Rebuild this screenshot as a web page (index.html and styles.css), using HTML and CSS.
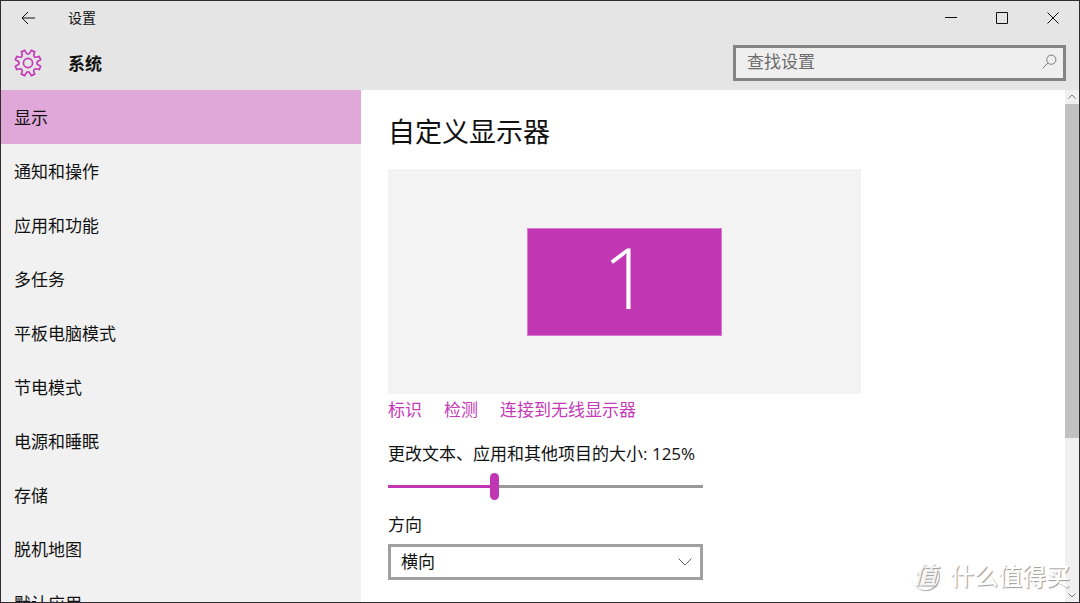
FILE: index.html
```html
<!DOCTYPE html>
<html lang="zh-CN">
<head>
<meta charset="utf-8">
<meta name="viewport" content="width=device-width, initial-scale=1">
<title>设置</title>
<link rel="stylesheet" href="styles.css">
</head>
<body>
<div class="window">
  <header class="top">
    <div class="titlebar">
      <button class="caption back" type="button" aria-label="返回">
        <svg width="16" height="14" viewBox="0 0 16 14"><path d="M15 7H2M8 1L2 7l6 6"/></svg>
      </button>
      <span class="app-name">设置</span>
      <button class="caption" type="button" aria-label="最小化">
        <svg width="12" height="12" viewBox="0 0 12 12"><path d="M0 5.5h12"/></svg>
      </button>
      <button class="caption" type="button" aria-label="最大化">
        <svg width="12" height="12" viewBox="0 0 12 12"><path d="M.5.5h11v11H.5z"/></svg>
      </button>
      <button class="caption" type="button" aria-label="关闭">
        <svg width="12" height="12" viewBox="0 0 12 12"><path d="M.5.5l11 11M11.5.5l-11 11"/></svg>
      </button>
    </div>
    <div class="heading">
      <svg class="gear" width="28" height="28" viewBox="-14 -14 28 28"><path d="M9.9 1.7L12.6 3.3L11.2 6.6L8.1 5.8A2 2 0 0 0 5.8 8.1L6.6 11.2L3.3 12.6L1.7 9.9A2 2 0 0 0 -1.7 9.9L-3.3 12.6L-6.6 11.2L-5.8 8.1A2 2 0 0 0 -8.1 5.8L-11.2 6.6L-12.6 3.3L-9.9 1.7A2 2 0 0 0 -9.9 -1.7L-12.6 -3.3L-11.2 -6.6L-8.1 -5.8A2 2 0 0 0 -5.8 -8.1L-6.6 -11.2L-3.3 -12.6L-1.7 -9.9A2 2 0 0 0 1.7 -9.9L3.3 -12.6L6.6 -11.2L5.8 -8.1A2 2 0 0 0 8.1 -5.8L11.2 -6.6L12.6 -3.3L9.9 -1.7A2 2 0 0 0 9.9 1.7Z"/><circle r="4.6"/></svg>
      <h1 class="section">系统</h1>
      <label class="search">
        <input class="search-input" type="search" placeholder="查找设置" aria-label="查找设置">
        <svg width="15" height="15" viewBox="0 0 15 15"><circle cx="9.3" cy="5.7" r="4.6"/><path d="M6 9L.7 14.3"/></svg>
      </label>
    </div>
  </header>
  <div class="body">
    <nav class="sidebar">
      <a class="item current" href="#" aria-current="page">显示</a>
      <a class="item" href="#">通知和操作</a>
      <a class="item" href="#">应用和功能</a>
      <a class="item" href="#">多任务</a>
      <a class="item" href="#">平板电脑模式</a>
      <a class="item" href="#">节电模式</a>
      <a class="item" href="#">电源和睡眠</a>
      <a class="item" href="#">存储</a>
      <a class="item" href="#">脱机地图</a>
      <a class="item" href="#">默认应用</a>
    </nav>
    <main class="content">
      <h2 class="title">自定义显示器</h2>
      <div class="preview"><button class="monitor" type="button">1</button></div>
      <div class="links">
        <a class="link" href="#">标识</a>
        <a class="link" href="#">检测</a>
        <a class="link" href="#">连接到无线显示器</a>
      </div>
      <label class="label" for="scale">更改文本、应用和其他项目的大小: 125%</label>
      <input class="slider" id="scale" type="range" min="100" max="175" step="25" value="125">
      <label class="label" for="orientation">方向</label>
      <div class="dropdown">
        <select class="select" id="orientation">
          <option>横向</option>
          <option>纵向</option>
        </select>
        <svg class="chevron" width="14" height="8" viewBox="0 0 14 8"><path d="M.5.5L7 7 13.5.5"/></svg>
      </div>
    </main>
    <div class="scrollbar">
      <svg width="8" height="5" viewBox="0 0 8 5"><path d="M.5 4.5L4 1l3.500 3.500"/></svg>
      <div class="track"><div class="thumb"></div></div>
      <svg width="8" height="5" viewBox="0 0 8 5"><path d="M.5.5L4 4 7.500.5"/></svg>
    </div>
  </div>
  <div class="watermark"><span class="seal">值</span><span>什么值得买</span></div>
</div>
</body>
</html>
```
FILE: styles.css
```css
* {
  box-sizing: border-box;
}

body {
  margin: 0;
  color: #111;
  font: 17px/24px "Open Sans", "Noto Sans CJK SC", sans-serif;
}

button,
input,
select {
  margin: 0;
  border: 0;
  padding: 0;
  background: none;
  color: inherit;
  font: inherit;
}

svg {
  display: block;
  flex: none;
  fill: none;
  stroke: currentColor;
}

.window {
  position: relative;
  display: flex;
  flex-direction: column;
  height: 100vh;
  overflow: hidden;
  border: 1px solid #302c31;
  background: #fff;
}

.top {
  flex: none;
  background: #e5e5e5;
}

.titlebar {
  display: flex;
  height: 34px;
  padding-right: 1px;
}

.caption {
  display: grid;
  place-items: center;
  width: 51px;
}

.back {
  width: 53px;
}

.app-name {
  flex: 1;
  padding-left: 14px;
  font-size: 14px;
  line-height: 34px;
}

.heading {
  display: flex;
  align-items: center;
  height: 55px;
  padding: 0 13px;
}

.gear {
  color: #c53ab8;
  stroke-width: 1.7;
}

.section {
  flex: 1;
  margin: 0;
  padding: 3px 0 0 26px;
  font-size: 17px;
  line-height: 24px;
}

.search {
  display: flex;
  align-items: center;
  width: 333px;
  height: 36px;
  padding: 0 6px 2px 11px;
  border: 3px solid #848484;
  background: #efefef;
  color: #7a7a7a;
}

.search-input {
  flex: 1;
  min-width: 0;
  outline: 0;
  appearance: none;
}

.search-input::placeholder {
  color: #6b6b6b;
  opacity: 1;
}

.body {
  display: flex;
  flex: 1;
  min-height: 0;
}

.sidebar {
  flex: none;
  width: 33.4%;
  overflow: hidden;
  background: #f1f1f1;
}

.item {
  display: block;
  padding: 16px 13px 14px;
  color: inherit;
  text-decoration: none;
}

.current {
  background: #e0a8d9;
}

.content {
  flex: 1;
  min-width: 0;
  overflow: hidden;
  padding: 24px 27px;
}

.title {
  margin: 0 0 19px;
  font-size: 27px;
  font-weight: 400;
  line-height: 36px;
}

.preview {
  display: grid;
  place-items: center;
  max-width: 473px;
  height: 225px;
  background: #f3f3f3;
}

.monitor {
  width: 195px;
  height: 108px;
  padding: 0 0 10px 4px;
  border: 1px solid #d77ccf;
  background: #c136b3;
  color: #fff;
  font-size: 84px;
  font-weight: 300;
  line-height: 96px;
}

.links {
  display: flex;
  gap: 22px;
  padding: 4px 0 20px;
}

.link {
  color: #c53ab8;
  text-decoration: none;
}

.label {
  display: block;
}

.slider {
  display: block;
  width: 315px;
  height: 27px;
  margin: 7px 0 13px;
  appearance: none;
}

.slider::-webkit-slider-runnable-track {
  height: 3px;
  background: linear-gradient(90deg, #c136b3 33%, #999 33%);
}

.slider::-webkit-slider-thumb {
  width: 9px;
  height: 27px;
  margin-top: -12px;
  border-radius: 5px;
  background: #c136b3;
  appearance: none;
}

.dropdown {
  display: grid;
  align-items: center;
  width: 315px;
  margin-top: 7px;
}

.select {
  grid-area: 1 / 1;
  height: 36px;
  padding: 0 10px;
  border: 3px solid #a0a0a0;
  appearance: none;
}

.chevron {
  grid-area: 1 / 1;
  justify-self: end;
  margin-right: 11px;
  color: #666;
  pointer-events: none;
}

.scrollbar {
  display: flex;
  flex-direction: column;
  align-items: center;
  gap: 5px;
  width: 14px;
  padding: 4px 0;
  background: #f0f0f0;
  color: #777;
}

.track {
  flex: 1;
  align-self: stretch;
}

.thumb {
  height: 69%;
  background: #c1c1c1;
}

.watermark {
  position: absolute;
  right: 9px;
  bottom: 10px;
  display: flex;
  align-items: center;
  gap: 11px;
  color: #fff;
  font-size: 24px;
  font-weight: 500;
  line-height: 32px;
  text-shadow: 1px 1px 1px #999;
  pointer-events: none;
}

.seal {
  width: 28px;
  height: 28px;
  border-radius: 50%;
  box-shadow: 1px 1px 1px #aaa;
  color: #f4f4f4;
  font-size: 24px;
  font-style: italic;
  line-height: 26px;
  text-align: center;
}
```
